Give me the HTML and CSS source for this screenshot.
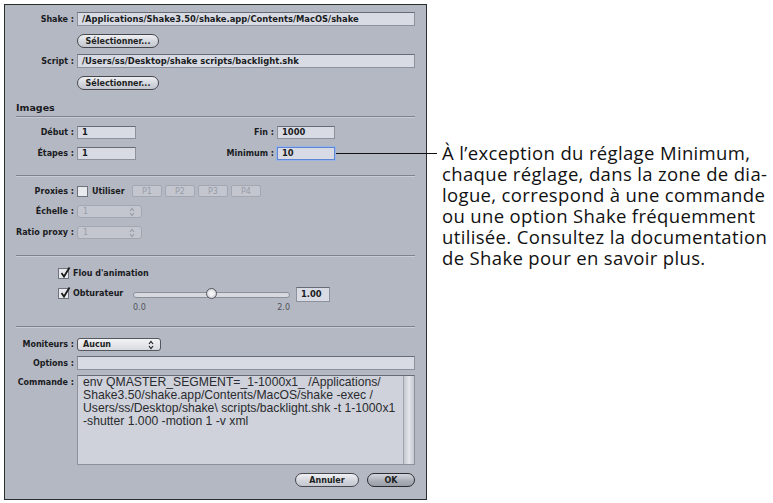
FILE: index.html
```html
<!DOCTYPE html>
<html lang="fr">
<head>
    <meta charset="UTF-8">
    <meta name="viewport" content="width=device-width, initial-scale=1.0">
    <title>Réglages Shake</title>
    <link rel="stylesheet" href="styles.css">
</head>
<body>
<div class="page">
    <div class="dialog">
        <!-- Chemins -->
        <div class="row row-path">
            <span class="label">Shake :</span>
            <span class="field field-wide">/Applications/Shake3.50/shake.app/Contents/MacOS/shake</span>
        </div>
        <div class="row row-btn">
            <span class="label"></span>
            <span class="pill pill-select">Sélectionner...</span>
        </div>
        <div class="row row-path row-script">
            <span class="label">Script :</span>
            <span class="field field-wide">/Users/ss/Desktop/shake scripts/backlight.shk</span>
        </div>
        <div class="row row-btn">
            <span class="label"></span>
            <span class="pill pill-select">Sélectionner...</span>
        </div>

        <!-- Images -->
        <div class="section-title">Images</div>
        <div class="row row-pair row-debut">
            <span class="label">Début :</span>
            <span class="field field-num">1</span>
            <span class="label">Fin :</span>
            <span class="field field-num">1000</span>
        </div>
        <div class="row row-pair row-etapes">
            <span class="label">Étapes :</span>
            <span class="field field-num">1</span>
            <span class="label">Minimum :</span>
            <span class="field field-num field-focus">10</span>
        </div>

        <div class="sep sep-1"></div>

        <!-- Proxies -->
        <div class="row row-proxies">
            <span class="label">Proxies :</span>
            <span class="proxy-opts">
                <span class="check"></span>
                <span class="opt-text">Utiliser</span>
                <span class="seg">P1</span>
                <span class="seg">P2</span>
                <span class="seg">P3</span>
                <span class="seg">P4</span>
            </span>
        </div>
        <div class="row row-popup row-echelle">
            <span class="label">Échelle :</span>
            <span class="popup popup-off popup-small">1
                <svg class="arrows" viewBox="0 0 6 10" width="6" height="10"><path d="M1 4 L3 1.5 L5 4 M1 6 L3 8.5 L5 6" fill="none" stroke="currentColor" stroke-width="1.2"/></svg>
            </span>
        </div>
        <div class="row row-popup row-ratio">
            <span class="label">Ratio proxy :</span>
            <span class="popup popup-off popup-small">1
                <svg class="arrows" viewBox="0 0 6 10" width="6" height="10"><path d="M1 4 L3 1.5 L5 4 M1 6 L3 8.5 L5 6" fill="none" stroke="currentColor" stroke-width="1.2"/></svg>
            </span>
        </div>

        <div class="sep sep-2"></div>

        <!-- Flou -->
        <div class="opt-line opt-flou">
            <span class="check checked">
                <svg viewBox="0 0 12 12" width="12" height="12"><path d="M2.5 6 L5 9.5 L10.5 0.5" fill="none" stroke="#1c1c1c" stroke-width="1.8"/></svg>
            </span>
            <span class="opt-text">Flou d'animation</span>
        </div>
        <div class="opt-line opt-obtu">
            <span class="check checked">
                <svg viewBox="0 0 12 12" width="12" height="12"><path d="M2.5 6 L5 9.5 L10.5 0.5" fill="none" stroke="#1c1c1c" stroke-width="1.8"/></svg>
            </span>
            <span class="opt-text opt-obtu-text">Obturateur</span>
            <span class="slider">
                <span class="track">
                    <span class="knob"></span>
                </span>
                <span class="scale"><span>0.0</span><span>2.0</span></span>
            </span>
            <span class="field field-value">1.00</span>
        </div>

        <div class="sep sep-3"></div>

        <!-- Commande -->
        <div class="row row-popup row-moniteurs">
            <span class="label">Moniteurs :</span>
            <span class="popup popup-mon">Aucun
                <svg class="arrows" viewBox="0 0 6 10" width="6" height="10"><path d="M1 4 L3 1.5 L5 4 M1 6 L3 8.5 L5 6" fill="none" stroke="currentColor" stroke-width="1.2"/></svg>
            </span>
        </div>
        <div class="row row-path row-options">
            <span class="label">Options :</span>
            <span class="field field-wide"></span>
        </div>
        <div class="row row-cmd">
            <span class="label">Commande :</span>
            <div class="cmd">
                <div class="cmd-text">env QMASTER_SEGMENT=_1-1000x1_ /Applications/<br>Shake3.50/shake.app/Contents/MacOS/shake -exec /<br>Users/ss/Desktop/shake\ scripts/backlight.shk -t 1-1000x1<br>-shutter 1.000 -motion 1 -v xml</div>
                <div class="cmd-scroll"></div>
            </div>
        </div>

        <div class="actions">
            <span class="pill pill-cancel">Annuler</span>
            <span class="pill pill-ok">OK</span>
        </div>
    </div>

    <div class="note">
        <span class="leader"></span>
        <span class="note-line">À l’exception du réglage Minimum,</span>
        <span class="note-line">chaque réglage, dans la zone de dia-</span>
        <span class="note-line">logue, correspond à une commande</span>
        <span class="note-line">ou une option Shake fréquemment</span>
        <span class="note-line">utilisée. Consultez la documentation</span>
        <span class="note-line">de Shake pour en savoir plus.</span>
    </div>
</div>
</body>
</html>
```

FILE: styles.css
```css
body {
    margin: 0;
    background: #fff;
    font-family: "DejaVu Sans", sans-serif;
}
.page {
    display: flex;
    align-items: flex-start;
    padding: 4px;
}
.dialog {
    width: 423px;
    height: 496px;
    box-sizing: border-box;
    background: #b4b8c3;
    border: 1px solid #2b2c30;
    padding: 7px 11px 0 11px;
    font-size: 8px;
    font-weight: bold;
    color: #1a1b1e;
}
.row {
    display: grid;
    grid-template-columns: 58px auto;
    column-gap: 3px;
    align-items: center;
}
.label {
    text-align: right;
    white-space: nowrap;
}
.field {
    display: block;
    box-sizing: border-box;
    height: 14px;
    line-height: 12px;
    padding: 0 4px;
    background: #d8dbe3;
    border: 1px solid #8d919c;
    border-top-color: #676b76;
    white-space: nowrap;
    overflow: hidden;
    font-size: 8.4px;
}
.field-wide {
    width: 338px;
}
.row-btn {
    margin-top: 8px;
}
.row-script {
    margin-top: 6px;
}
.pill {
    display: inline-flex;
    align-items: center;
    justify-content: center;
    box-sizing: border-box;
    height: 14px;
    border: 1px solid #46484e;
    border-radius: 7px;
    background: linear-gradient(#f0f1f4, #d3d6dd 55%, #c4c7cf);
    color: #1e1f22;
}
.pill-select {
    width: 82px;
}

.section-title {
    margin-top: 10px;
    height: 16px;
    line-height: 16px;
    font-size: 9.5px;
    border-bottom: 1px solid #7e828d;
    box-shadow: 0 1px 0 #c9ccd4;
}

.row-pair {
    grid-template-columns: 58px 59px 135px 58px;
}
.field-num {
    height: 13px;
    line-height: 11px;
}
.row-debut {
    margin-top: 9px;
}
.row-etapes {
    margin-top: 8px;
}
.field-focus {
    border: 1px solid #5f86d4;
    box-shadow: 0 0 0 1px #9bb4e6;
}

.sep {
    height: 1px;
    background: #7e828d;
    box-shadow: 0 1px 0 #c9ccd4;
}
.sep-1 {
    margin-top: 15px;
}
.sep-2 {
    margin-top: 16px;
}
.sep-3 {
    margin-top: 13px;
}

.row-proxies {
    margin-top: 9px;
}
.proxy-opts {
    display: flex;
    align-items: center;
    height: 12px;
}
.check {
    display: inline-block;
    box-sizing: border-box;
    width: 11px;
    height: 11px;
    background: #e9eaee;
    border: 1px solid #6f737d;
    position: relative;
}
.check svg {
    position: absolute;
    left: 0;
    top: -2px;
}
.opt-text {
    margin-left: 4px;
}
.proxy-opts .opt-text {
    width: 40px;
}
.seg {
    display: inline-flex;
    align-items: center;
    justify-content: center;
    box-sizing: border-box;
    width: 30px;
    height: 12px;
    margin-right: 3px;
    border: 1px solid #a3a7b1;
    border-radius: 2px;
    background: #c3c6cf;
    color: #989ca6;
    font-weight: normal;
}

.row-echelle {
    margin-top: 8px;
}
.row-ratio {
    margin-top: 8px;
}
.popup {
    display: flex;
    align-items: center;
    justify-content: space-between;
    box-sizing: border-box;
    height: 13px;
    padding: 0 6px 0 5px;
    border: 1px solid #55575e;
    border-radius: 3px;
    background: linear-gradient(#f2f3f5, #d9dbe1);
    color: #1e1f22;
}
.popup-off {
    border-color: #a3a7b1;
    background: #c3c6cf;
    color: #989ca6;
    font-weight: normal;
}
.popup-small {
    width: 65px;
}
.popup-mon {
    width: 84px;
}
.arrows {
    display: block;
}

.opt-line {
    display: flex;
    align-items: center;
    margin-left: 42px;
}
.opt-flou {
    margin-top: 11px;
    height: 12px;
}
.opt-obtu {
    margin-top: 8px;
    align-items: flex-start;
}
.opt-obtu .check {
    margin-top: 1px;
}
.opt-obtu-text {
    width: 60px;
    line-height: 13px;
}
.slider {
    display: flex;
    flex-direction: column;
    width: 157px;
}
.track {
    position: relative;
    height: 4px;
    margin-top: 5px;
    border: 1px solid #8b8f99;
    border-radius: 3px;
    background: #d7d9df;
}
.knob {
    position: absolute;
    left: 72px;
    top: -5px;
    box-sizing: border-box;
    width: 11px;
    height: 11px;
    border: 1.5px solid #55585f;
    border-radius: 50%;
    background: radial-gradient(circle, #f4f4f6 30%, #b9bcc5);
}
.scale {
    display: flex;
    justify-content: space-between;
    margin-top: 5px;
    color: #50535b;
    font-weight: normal;
    font-size: 8px;
    line-height: 10px;
}
.field-value {
    width: 34px;
    height: 15px;
    margin-left: 6px;
    line-height: 13px;
}

.row-moniteurs {
    margin-top: 11px;
}
.row-options {
    margin-top: 5px;
}
.row-cmd {
    margin-top: 5px;
    align-items: start;
}
.row-cmd .label {
    padding-top: 3px;
}
.cmd {
    display: flex;
    box-sizing: border-box;
    width: 338px;
    height: 90px;
    background: #cfd2da;
    border: 1px solid #8d919c;
    border-top-color: #676b76;
}
.cmd-text {
    flex: 1;
    padding: 0 0 0 5px;
    font-family: "Liberation Sans", Arial, sans-serif;
    font-weight: normal;
    font-size: 12.2px;
    line-height: 13px;
    color: #2a2b2f;
    white-space: nowrap;
}
.cmd-scroll {
    width: 10px;
    border-left: 1px solid #9fa3ad;
    background: linear-gradient(90deg, #c4c7cf, #e4e6eb 50%, #c4c7cf);
}

.actions {
    display: flex;
    justify-content: flex-end;
    gap: 8px;
    margin-top: 8px;
}
.pill-cancel {
    width: 64px;
}
.pill-ok {
    width: 48px;
    border: 1.5px solid #2c2d31;
    background: linear-gradient(#d4d6dc, #a9adb6 60%, #9a9ea8);
}

.note {
    position: relative;
    margin: 138px 0 0 15px;
    font-family: "Open Sans", sans-serif;
    font-size: 18.5px;
    letter-spacing: 0.35px;
    color: #111;
    white-space: nowrap;
}
.note-line {
    display: block;
    height: 21px;
    line-height: 21px;
}
.leader {
    position: absolute;
    left: -106px;
    top: 11px;
    width: 101px;
    height: 1px;
    background: #111;
}
```
